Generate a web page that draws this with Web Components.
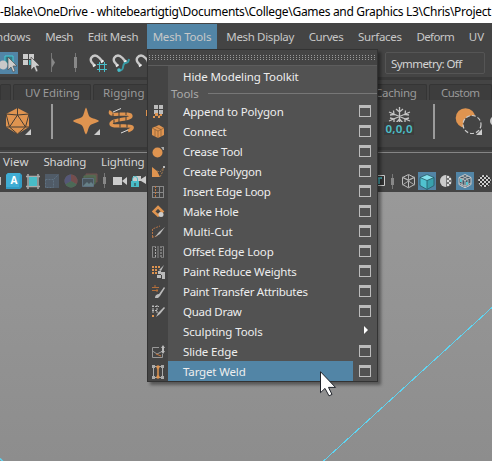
<!DOCTYPE html>
<html lang="en"><head><meta charset="utf-8"><title>Modeling workspace</title>
<style>html,body{margin:0;width:492px;height:461px;overflow:hidden;background:#444}</style></head>
<body><modeling-app></modeling-app>
<script>
const tri=(x,y)=>`<path d="M${x} ${y-6}v6h-6z" fill="#ccc"/>`;
const cube=(x,y,f,s)=>`<path d="M${x} ${y-6.5}l6 3v7l-6 3.300-6-3.300v-7z" fill="${f}"/><path d="M${x} ${y-6.5}l6 3v7l-6 3.300-6-3.300v-7zM${x-6} ${y-3.5}l6 3 6-3M${x} ${y-.5}v7" fill="none" stroke="${s}"/>`;
const magnet=x=>`<path d="M${x+5} 65l-2.500-3c-2-3 .5-6.500 3.500-6.500 1.500 0 3 1 4.500 2.500l3 3.500" fill="none" stroke="#c8c8c8" stroke-width="2.400"/><path d="M${x+4} 66.500l2.500-2M${x+12} 62.500l2.500-2" stroke="#eee" stroke-width="1.800"/>`;
const sep=(x,y,h)=>`<path d="M${x} ${y}v${h}" stroke="#777"/><path d="M${x} ${y+4}v${h-8}" stroke="#888" stroke-width="3"/>`;
const arrow=x=>`<path d="M${x} 57v13l3-3 2 5 2-1-2-5h4z" fill="#ccc" stroke="#444" stroke-width=".6"/>`;
const G={
/* status line */
select:[0,49,18,28,`<path d="M0 52h18v22H0z" fill="#5285a6"/><path d="M5 56h8v8H5z" fill="#347b87" stroke="#45cbd5"/><circle cx="3" cy="65" r="4.500" fill="#c8c8c8"/>${arrow(8)}`],
multi:[22,49,17,28,`<path d="M23 54h5v5h-5zM29 54h5v5h-5zM23 60h5v5h-5z" fill="#ccc"/><path d="M29 60h3v5h-3z" fill="#42b9c4"/>${arrow(31)}`],
sepA:[50,49,6,28,`<path d="M51.500 53v19" stroke="#777"/><path d="M52 58l3 4.500-3 5z" fill="#888"/>`],
sepB:[73,49,5,28,sep(75.5,53,19)],
magGrid:[89,49,19,28,magnet(89)+`<path d="M99.500 62v10M104.500 62v10M97 64.500h10M97 69.500h10" stroke="#48bcc7"/>`],
magCurve:[112,49,19,28,magnet(112)+`<path d="M118 71c8 0 3-6 7-8 2-1 3 1 4-4" fill="none" stroke="#389ba6" stroke-width="2"/><circle cx="119" cy="70" r="1.800" fill="#48bcc7"/>`],
mag:[135,49,12,28,magnet(135)],
/* shelf */
ico:[5,100,27,47,`<path d="M17.500 108L29 114v13l-11.500 7L6 127v-13z" fill="#df9450"/><path d="M17.500 108v7l-8 12 8 7 8-7-8-12M6 114l11.500 1 11.500-1-3.500 13H9.500L6 114M6 127h3.500M29 127h-3.500" fill="none" stroke="#443c35"/>${tri(31,135)}`],
bar:[50,100,4,47,`<path d="M51 104h2v35h-2z" fill="#9b9b9b"/>`],
star:[72,100,29,47,`<path d="M86 107.500c1.500 2 2 8 4 9.500s7 2 9 4c-2 2-7 2.500-9 4.500s-2 7-4 9c-2-2-2-7-4-9s-7-2.500-9-4.500c2-2 7-2.500 9-4s2.500-7.500 4-9.500z" fill="#df9450"/>${tri(100,135)}`],
coil:[108,100,26,47,`<path d="M111 111c-5 7 20 0 20 5 0 4-20 3-20 8 0 4 19 0 21 3 1 2-2 3-4 4" fill="none" stroke="#df9450" stroke-width="3.300"/><path d="M113 113.500v3M119 112v4M126 111v4M126 117v4M119 118v4M114 120v4M120 123.500v4M127 123.500v4" stroke="#443c35"/><path d="M113 112l8-3.500M121 133l7-3" stroke="#ddd"/>`],
bit:[146,100,1,47,`<path d="M146 110h1v6h-1z" fill="#df9450"/>`],
snow:[384,100,30,47,`<path d="M399.500 107v17M389 121l21-9M389 112l21 9M396 109l3.500 3 3.500-3M390 115l4-.5-.5-4M409 115l-4-.5.5-4M396 123l3.500-4 3.500 4M394 123v-4l-4-1M405 123v-4l4-1" fill="none" stroke="#c4c4c4" stroke-width="1.300"/><path d="M384 122h30v13h-30z" fill="#3c3c3c"/><text x="385.500" y="132.500" textLength="27" font-family="Noto Sans,sans-serif" font-size="11.500" font-weight="600" fill="#4cc0ca">0,0,0</text>`],
bar2:[432,100,4,47,`<path d="M433 104h2v35h-2z" fill="#9b9b9b"/>`],
moon:[455,100,28,47,`<circle cx="465.500" cy="118" r="9.800" fill="#df9450"/><circle cx="472" cy="124.500" r="9" fill="#444" stroke="#ccc" stroke-width="1.200" stroke-dasharray="4 2"/>${tri(482,135)}`],
dot:[490,100,2,47,`<circle cx="495" cy="121" r="5" fill="#ccc"/>`],
/* panel toolbar */
edge:[0,170,2,22,`<path d="M0 177h1v8H0z" fill="#bbb"/>`],
A:[6,170,16,22,`<path d="M8 173h12l2 2v12l-2 2H6v-14z" fill="#329bc4"/><path d="M8 173h12l-1 14H6v-12z" fill="#40add4"/><text x="10.500" y="184" font-family="Noto Sans,sans-serif" font-weight="bold" font-size="10" fill="#fff">A</text>`],
gate:[26,170,15,22,`<path d="M28 174v15M38 174v15M26 176.500h14M26 186.500h14" stroke="#aaa" stroke-width="1.500"/><path d="M29 177h8v9h-8z" fill="#48bbc6"/>`],
fade:[44,170,16,22,`<path d="M45 174h14v14H45z" fill="#505b67"/><path d="M45.500 179.500h8v8h-8zM54 179l4-4" fill="none" stroke="#5e7181" stroke-dasharray="2 1"/>`],
wheel:[64,170,14,22,`<circle cx="71" cy="181" r="6.500" fill="#666"/><path d="M71 181v-6.500a6.500 6.500 0 015.600 9.700z" fill="#744d4d"/><path d="M71 181l5.600 3.200a6.500 6.500 0 01-11.200 0z" fill="#4c6a57"/><path d="M71 181l-5.600 3.200A6.500 6.500 0 0171 174.500z" fill="#555777"/>`],
pics:[82,170,16,22,`<path d="M86 174h11v8H86z" fill="#59614f" stroke="#735050"/><path d="M84 176h11v8H84z" fill="#526050" stroke="#537355"/><path d="M82.500 178.500h11v8h-11z" fill="#48545c" stroke="#5f7180"/><path d="M83 186l4-4 2 2 2-2 2 2v2z" fill="#668087"/>`],
sepC:[102,170,5,22,sep(104.5,173,15)],
cam:[112,170,16,22,`<path d="M113 177h9v8h-9zM122 181l5-4v8z" fill="#ccc"/>`],
camLock:[131,170,16,22,`<path d="M133 177v-1h8v5h-8zM141 179l5-3v8l-5-3z" fill="#ccc"/><path d="M132.500 181v-2a2.500 2.500 0 015 0v2" fill="none" stroke="#48bcc7"/><path d="M131 181h8v6h-8z" fill="#48bcc7"/><path d="M134.500 183h1v3h-1z" fill="#333"/>`],
T:[372,170,14,22,`<path d="M373 175.500h11.500v10H373z" fill="#333" stroke="#ccc"/><path d="M375 178h7M379 178v6" stroke="#4cc0ca" stroke-width="1.500"/>`],
sepD:[390,170,5,22,sep(392.5,174,15)],
wire:[401,170,15,22,cube(408.5,181,'none','#bbb')+`<path d="M408.500 175v6l-6 4M408.500 181l6 4M402.500 177l6 3 6-3" stroke="#aaa" fill="none"/>`],
solid:[418,170,18,22,`<path d="M418 172h18v18h-18z" fill="#5285a6"/><path d="M427 174.500l7 3v8l-7 4-7-4v-8z" fill="#50c2cf"/><path d="M420 177.500l7-3 7 3-7 3z" fill="#83e1ed"/><path d="M427 180.500v9l7-4v-8z" fill="#39a1ad"/><path d="M420 177.500l7 3 7-3M427 180.500v9M427 174.500l7 3v8l-7 4-7-4v-8z" fill="none" stroke="#275763" stroke-width=".8"/>`],
half:[439,170,14,22,`<circle cx="446" cy="181" r="6" fill="#777"/><path d="M446 175a6 6 0 000 12z" fill="#ccc"/><path d="M447 176h2v2h-2zM449 178h2v2h-2zM447 180h2v2h-2zM449 182h2v2h-2zM447 184h2v2h-2z" fill="#ddd"/>`],
tex:[456,170,18,22,`<path d="M456 172h18v18h-18z" fill="#5285a6"/>${cube(465,181,'#415766','#ccc')}<path d="M462 176l6 3M468 176l-6 3M462 180v7M459 183l6 3M468 180v7M471 183l-6 3" stroke="#bbb"/><path d="M460 179h2v3h-2zM466 182h2v3h-2z" fill="#55c5d0"/>`],
check:[478,170,13,22,`<clipPath id="c"><circle cx="484.500" cy="181" r="6.300"/></clipPath><g clip-path="url(#c)"><path d="M478 174h14v14h-14z" fill="#333"/><path d="M478 176h14M478 180h14M478 184h14" stroke="#ccc" stroke-width="2" stroke-dasharray="2 2"/><path d="M480 178h12M480 182h12M480 186h12" stroke="#ccc" stroke-width="2" stroke-dasharray="2 2"/></g>`],
/* menu items, 14 x 14 */
append:[0,0,14,14,`<path d="M2 0h4v4H2zM7 0h4v4H7zM2 5h4v4H2zM7 5h4v4H7z" fill="#bbb"/><path d="M3 8h3v3l2-1v3H6v-2H3v2H1v-2h2zM8 9h2v2H8z" fill="#df9450"/>`],
connect:[0,0,14,14,`<path d="M7 0l5 3v7l-6 3-6-3V3z" fill="#df9450"/><path d="M0 3l6 3 6-3M6 6v7M3 4.500v7M9 4.500v7M3 1.500l6 3" fill="none" stroke="#76502f" stroke-width=".6"/>`],
crease:[0,0,14,14,`<circle cx="5.500" cy="7.500" r="5" fill="#df9450"/><path d="M9 2h3v3h-1z" fill="#aaa"/>`],
create:[0,0,14,14,`<path d="M0 2l5 4 3 6H0z" fill="#df9450"/><path d="M5 6l3 1 4-5-2 6-2 4" fill="none" stroke="#a47a50" stroke-dasharray="2 1"/><path d="M11 1h2v2h-2z" fill="#bbb"/>`],
insert:[0,0,14,14,`<path d="M.5 1v12M7.500 1v12M11.500 1v12M0 1.500h12M0 7.500h12M0 12.500h12" stroke="#888"/><path d="M3.500 1v12" stroke="#c6783e" stroke-dasharray="2 1"/>`],
hole:[0,0,14,14,`<path d="M6 2l4.500 4.500L6 10.500 1.500 6.500z" fill="none" stroke="#df9450" stroke-width="2.500"/><circle cx="9" cy="9.500" r="2.500" fill="#ccc"/>`],
cut:[0,0,14,14,`<path d="M.5 12V4L8 1M0 12.500l6-2" fill="none" stroke="#b47346" stroke-dasharray="2 1"/><path d="M3 12L7 7l6-5-5 7z" fill="#bbb"/>`],
offset:[0,0,14,14,`<path d="M.5 1v12M6 1v12M11.500 1v12" stroke="#888"/><path d="M3.500 1v12M9 1v12" stroke="#aaa" stroke-dasharray="2 1"/><path d="M0 1.500h4M9 1.500h3M0 12.500h4M9 12.500h3" stroke="#777"/>`],
reduce:[0,0,14,14,`<path d="M0 1h2v2H0zM3 1h2v2H3zM6 1h2v2H6zM0 4h2v2H0zM3 4h2v2H3zM0 7h2v2H0zM3 7h2v2H3z" fill="#df9450"/><path d="M7 5l5-5-3 6zM6 6h3v3H6zM9 7h4v3H9zM5 10h4v3H5zM10 10h3v4h-3z" fill="#bbb"/>`],
transfer:[0,0,14,14,`<path d="M0 2.500h7M0 5.500h6M3 0v3M5 4v3" stroke="#b36f3b"/><path d="M3 13c0-3 2-4 4-4l5-7 1 1-5 8-2 2z" fill="#bbb"/>`],
quad:[0,0,14,14,`<path d="M1 0v8M5 0v8M0 1.500h7M0 5.500h6" stroke="#bbb" stroke-dasharray="2 1"/><path d="M4 12l2-4 6-6 1 1-5 6z" fill="#bbb"/><path d="M0 10h2v2H0z" fill="#df9450"/>`],
slide:[0,0,14,14,`<path d="M7 2.500H.5v10h10V9M.5 6L5 9l6-3" fill="none" stroke="#999"/><path d="M4 9l5 2" stroke="#c6783e"/><path d="M11 0l2 3h-1v3h1l-2 3-2-3h1V3H9z" fill="#bbb"/>`],
weld:[0,0,14,14,`<path d="M1.500 1v12M10.500 1v12M0 1.500h12M0 12.500h12" stroke="#aaa"/><path d="M0 0h3v3H0zM9 0h3v3H9zM0 11h3v3H0zM9 11h3v3H9z" fill="#aaa"/><path d="M6 2v10" stroke="#df9450" stroke-width="1.500"/><circle cx="6" cy="2" r="1.700" fill="#df9450"/><circle cx="6" cy="12" r="1.700" fill="#df9450"/>`]
};
function define(name,html,after){customElements.define(name,class extends HTMLElement{connectedCallback(){
 if(this.shadowRoot)return;const r=this.attachShadow({mode:'open'});r.innerHTML=typeof html==='function'?html(this):html;if(after)after(this,r);}});}

define('ui-icon',e=>{const [x,y,w,h,s]=G[e.getAttribute('name')];
 return `<style>:host{display:block;flex:none;width:${w}px;height:${h}px}svg{display:block}</style><svg width="${w}" height="${h}" viewBox="${x} ${y} ${w} ${h}">${s}</svg>`;});

/* A single-line label whose tracking is adjusted so that it occupies the width in "w". */
define('ui-label',e=>`<style>:host{display:block;flex:none;white-space:pre;width:${e.getAttribute('w')}px}span{display:inline-block}</style><span>${e.getAttribute('text')}</span>`,
 (e,r)=>{const s=r.querySelector('span');s.style.letterSpacing=((+e.getAttribute('w')+.6-s.getBoundingClientRect().width)/s.textContent.length)+'px';});

define('title-bar',`<style>:host{display:flex;height:23px;background:#fff;color:#000;font-size:12px;align-items:center;overflow:hidden}</style><ui-label w="490.500" text="-Blake\\OneDrive - whitebeartigtig\\Documents\\College\\Games and Graphics L3\\Chris\\Project"></ui-label>`);

define('menu-bar',`<style>:host{display:flex;height:26px;padding-top:1px;box-sizing:border-box;color:#c8c8c8;overflow:hidden}
ui-label{padding:0 7.700px;line-height:25px;height:25px}ui-label:first-of-type{margin-left:-24.800px}.on{background:#5285a6;padding:0 6px;margin:0 2px 0 1.300px}</style>
<ui-label w="47" text="Windows"></ui-label><ui-label w="27" text="Mesh"></ui-label><ui-label w="50" text="Edit Mesh"></ui-label><ui-label class="on" w="58" text="Mesh Tools"></ui-label><ui-label w="67" text="Mesh Display"></ui-label><ui-label w="34" text="Curves"></ui-label><ui-label w="43" text="Surfaces"></ui-label><ui-label w="37" text="Deform"></ui-label><ui-label w="15" text="UV"></ui-label>`);

define('status-line',`<style>:host{display:flex;height:28px}.sym{margin:3px 7px 0 auto;width:98px;height:20px;border:1px solid #555;border-radius:2px;box-sizing:content-box;line-height:22px;color:#d4d4d4;background:#444}.sym ui-label{margin-left:5px}</style>
<ui-icon name="select"></ui-icon><ui-icon name="multi" style="margin-left:4px"></ui-icon><ui-icon name="sepA" style="margin-left:11px"></ui-icon><ui-icon name="sepB" style="margin-left:17px"></ui-icon><ui-icon name="magGrid" style="margin-left:11px"></ui-icon><ui-icon name="magCurve" style="margin-left:4px"></ui-icon><ui-icon name="mag" style="margin-left:4px"></ui-icon><div class="sym"><ui-label w="70" text="Symmetry: Off"></ui-label></div>`);

define('shelf-tabs',`<style>:host{display:flex;height:23px;box-sizing:border-box;padding-top:7px;background:linear-gradient(#393939 3px,#444 3px);gap:2px;color:#999}
.t{box-sizing:border-box;height:16px;border:1px solid #353535;border-bottom:0;border-radius:2px 2px 0 0;background:#3d3d3d;line-height:15px;flex:none;padding-left:11px}.gap{flex:1}</style>
<div class="t" style="width:11px;padding:0;margin-left:0"></div><div class="t" style="width:78px"><ui-label w="54" text="UV Editing"></ui-label></div><div class="t" style="width:60px;padding-left:9px"><ui-label w="41" text="Rigging"></ui-label></div><div class="gap"></div><div class="t" style="width:64px;padding-left:11px"><ui-label w="41" text="Caching"></ui-label></div><div class="t" style="width:63px;padding-left:11px"><ui-label w="38" text="Custom"></ui-label></div>`);

define('tool-shelf',`<style>:host{display:flex;height:54px;box-sizing:border-box;background:linear-gradient(#444 47px,#393939 47px 50px,#444 50px 52px,#858585 52px 53px,#444 53px)}</style>
<ui-icon name="ico" style="margin-left:5px"></ui-icon><ui-icon name="bar" style="margin-left:18px"></ui-icon><ui-icon name="star" style="margin-left:18px"></ui-icon><ui-icon name="coil" style="margin-left:7px"></ui-icon><ui-icon name="bit" style="margin-left:12px"></ui-icon>
<ui-icon name="snow" style="margin-left:auto"></ui-icon><ui-icon name="bar2" style="margin-left:18px"></ui-icon><ui-icon name="moon" style="margin-left:19px"></ui-icon><ui-icon name="dot" style="margin-left:7px"></ui-icon>`);

define('panel-menu',`<style>:host{display:flex;height:16px;line-height:16px;padding-left:3px;gap:15.500px;color:#d4d4d4}</style><ui-label w="25" text="View"></ui-label><ui-label w="42" text="Shading"></ui-label><ui-label w="43" text="Lighting"></ui-label>`);

define('panel-tools',`<style>:host{display:flex;height:22px}.r{margin-left:auto}</style>
<ui-icon name="edge"></ui-icon><ui-icon name="A" style="margin-left:4px"></ui-icon><ui-icon name="gate" style="margin-left:4px"></ui-icon><ui-icon name="fade" style="margin-left:3px"></ui-icon><ui-icon name="wheel" style="margin-left:4px"></ui-icon><ui-icon name="pics" style="margin-left:4px"></ui-icon><ui-icon name="sepC" style="margin-left:4px"></ui-icon><ui-icon name="cam" style="margin-left:5px"></ui-icon><ui-icon name="camLock" style="margin-left:3px"></ui-icon>
<ui-icon class="r" name="T"></ui-icon><ui-icon name="sepD" style="margin-left:4px"></ui-icon><ui-icon name="wire" style="margin-left:6px"></ui-icon><ui-icon name="solid" style="margin-left:2px"></ui-icon><ui-icon name="half" style="margin-left:3px"></ui-icon><ui-icon name="tex" style="margin-left:3px"></ui-icon><ui-icon name="check" style="margin:0 1px 0 4px"></ui-icon>`);

define('view-port',`<style>:host{display:block;flex:1;background:linear-gradient(#999,#8d8d8d)}svg{display:block}</style><svg width="492" height="269" viewBox="0 192 492 269"><path d="M323 461.500L492.500 307" stroke="#5dd5f3" shape-rendering="crispEdges"/><path d="M0 458.500l3 3" stroke="#5dd5f3" stroke-width="1.500"/></svg>`);

define('menu-item',e=>{const i=e.getAttribute('icon'),k=e.getAttribute('end');return `<style>:host{display:grid;grid-template-columns:20px 185px 24px;height:20px;color:#eee}
.i{padding:4px 0 0 4px}.n{padding-left:15px;line-height:22px;height:20px}:host([active]) .n{background:#5285a6}.o{box-sizing:border-box;width:12px;height:12px;border:1px solid #bbb;border-top-width:3px;margin:4px 0 0 6px}.a{width:0;height:0;border:4px solid transparent;border-left:4px solid #fff;border-right:0;margin:5px 0 0 11px}</style><div class="i">${i?`<ui-icon name="${i}"></ui-icon>`:''}</div><div class="n"><ui-label w="${e.getAttribute('w')}" text="${e.getAttribute('text')}"></ui-label></div><div>${k==='none'?'':k==='sub'?'<div class="a"></div>':'<div class="o"></div>'}</div>`;});

const items=[['append','Append to Polygon',100],['connect','Connect',43],['crease','Crease Tool',59],['create','Create Polygon',78],['insert','Insert Edge Loop',87],['hole','Make Hole',55],['cut','Multi-Cut',49],['offset','Offset Edge Loop',90],['reduce','Paint Reduce Weights',113],['transfer','Paint Transfer Attributes',124],['quad','Quad Draw',58],['','Sculpting Tools',79,'sub'],['slide','Slide Edge',54],['weld','Target Weld',62]];
define('drop-menu',`<style>:host{display:block;box-sizing:border-box;width:231px;height:333px;border:1px solid #333;background:linear-gradient(90deg,#444 20px,#525252 20px);box-shadow:3px 3px 3px #0006}
.tear{height:15px;background:#444;border-bottom:1px solid #5d5d5d;display:flex;align-items:center}.dots{margin-left:1px;width:226px;height:5px;background:repeating-linear-gradient(90deg,#999 0 1px,transparent 1px 3px);-webkit-mask:repeating-linear-gradient(#000 0 1px,transparent 1px 2px);mask:repeating-linear-gradient(#000 0 1px,transparent 1px 2px)}
.s{display:flex;height:15px;align-items:center;padding-left:23px;gap:10px;color:#aaa}.s ui-label{line-height:18px}.s i{height:1px;background:#777;flex:1}</style><div class="tear"><div class="dots"></div></div><menu-item end="none" text="Hide Modeling Toolkit" w="115"></menu-item><div class="s"><ui-label w="27" text="Tools"></ui-label><i></i></div>${items.map((m,n)=>`<menu-item icon="${m[0]}" text="${m[1]}" w="${m[2]}" end="${m[3]||'box'}" ${n===13?'active':''}></menu-item>`).join('')}`);

define('mouse-pointer',`<style>:host{display:block}svg{display:block}</style><svg width="17" height="26" viewBox="0 0 17 26"><path d="M.5.700v21l4.500-4.300 4 7.500 3-1.500-3.500-7h7z" fill="#fff" stroke="#20242b"/></svg>`);

define('modeling-app',`<style>:host{display:flex;flex-direction:column;position:relative;width:492px;height:461px;overflow:hidden;background:#444;font:11.500px/16px "Noto Sans","Open Sans",sans-serif}drop-menu{position:absolute;left:147px;top:49px}mouse-pointer{position:absolute;left:320px;top:371px}</style>
<title-bar></title-bar><menu-bar></menu-bar><status-line></status-line><shelf-tabs></shelf-tabs><tool-shelf></tool-shelf><panel-menu></panel-menu><panel-tools></panel-tools><view-port></view-port><drop-menu></drop-menu><mouse-pointer></mouse-pointer>`);
</script></body></html>
